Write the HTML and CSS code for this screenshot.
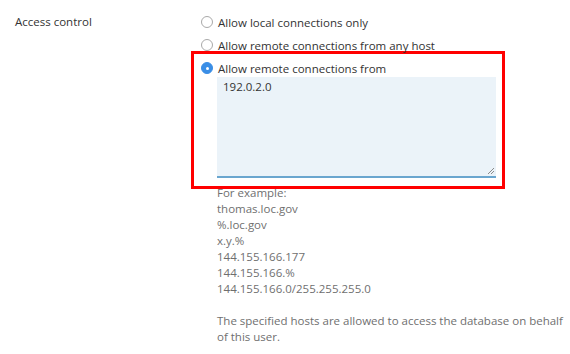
FILE: index.html
```html
<!DOCTYPE html>
<html>
<head>
<meta charset="utf-8">
<link rel="stylesheet" href="styles.css">
</head>
<body>
<div class="row">
  <div class="label">Access control</div>
  <div class="field">
    <label class="opt"><span class="radio"></span>Allow local connections only</label>
    <label class="opt"><span class="radio"></span>Allow remote connections from any host</label>
    <div class="highlight">
      <label class="opt"><span class="radio checked"></span>Allow remote connections from</label>
      <div class="textarea"><span class="value">192.0.2.0</span><svg class="grip" width="8" height="8" viewBox="0 0 8 8"><path d="M7 1L1 7M7 4L4 7" stroke="#8a8a8a" stroke-width="1" fill="none"/></svg></div>
    </div>
    <div class="help">
      <div>For example:</div>
      <div>thomas.loc.gov</div>
      <div>%.loc.gov</div>
      <div>x.y.%</div>
      <div>144.155.166.177</div>
      <div>144.155.166.%</div>
      <div>144.155.166.0/255.255.255.0</div>
      <div class="gap">The specified hosts are allowed to access the database on behalf of this user.</div>
    </div>
  </div>
</div>
</body>
</html>
```

FILE: styles.css
```css
html, body {
  margin: 0;
  padding: 0;
  background: #ffffff;
}
body {
  font-family: "Open Sans", "Liberation Sans", sans-serif;
  font-size: 11.5px;
  color: #333333;
  width: 570px;
  height: 354px;
  overflow: hidden;
}
.row {
  display: flex;
  padding-top: 13px;
}
.label {
  width: 186px;
  padding-left: 15px;
  line-height: 18px;
  flex: none;
}
.field {
  width: 369px;
  flex: none;
}
.opt {
  display: flex;
  align-items: center;
  height: 18px;
  margin-bottom: 5px;
  white-space: nowrap;
}
.radio {
  width: 10px;
  height: 10px;
  border: 1px solid #a9a9a9;
  border-radius: 50%;
  background: #fff;
  margin-right: 5px;
  flex: none;
  box-sizing: content-box;
}
.radio.checked {
  border-color: #3a8ee6;
  background: #3a8ee6;
  position: relative;
}
.radio.checked::after {
  content: "";
  position: absolute;
  left: 3.5px;
  top: 3.5px;
  width: 3px;
  height: 3px;
  border-radius: 50%;
  background: #fff;
}
.highlight {
  border: 3px solid #ff0000;
  margin-left: -10px;
  width: 301px;
  padding: 5px 0 8px 7px;
  margin-top: -8px;
}
.highlight .opt {
  margin-bottom: 0;
}
.textarea {
  margin-left: 16px;
  width: 279px;
  height: 99px;
  background: #ebf3f9;
  border-bottom: 2px solid #6aa6cf;
  position: relative;
  box-sizing: content-box;
}
.value {
  display: block;
  padding: 1px 0 0 6px;
  line-height: 18px;
}
.grip {
  position: absolute;
  right: 1px;
  bottom: 1px;
}
.help {
  margin-left: 16px;
  margin-top: -4px;
  color: #6f6f6f;
  line-height: 16px;
}
.help .gap {
  margin-top: 16px;
}
```
